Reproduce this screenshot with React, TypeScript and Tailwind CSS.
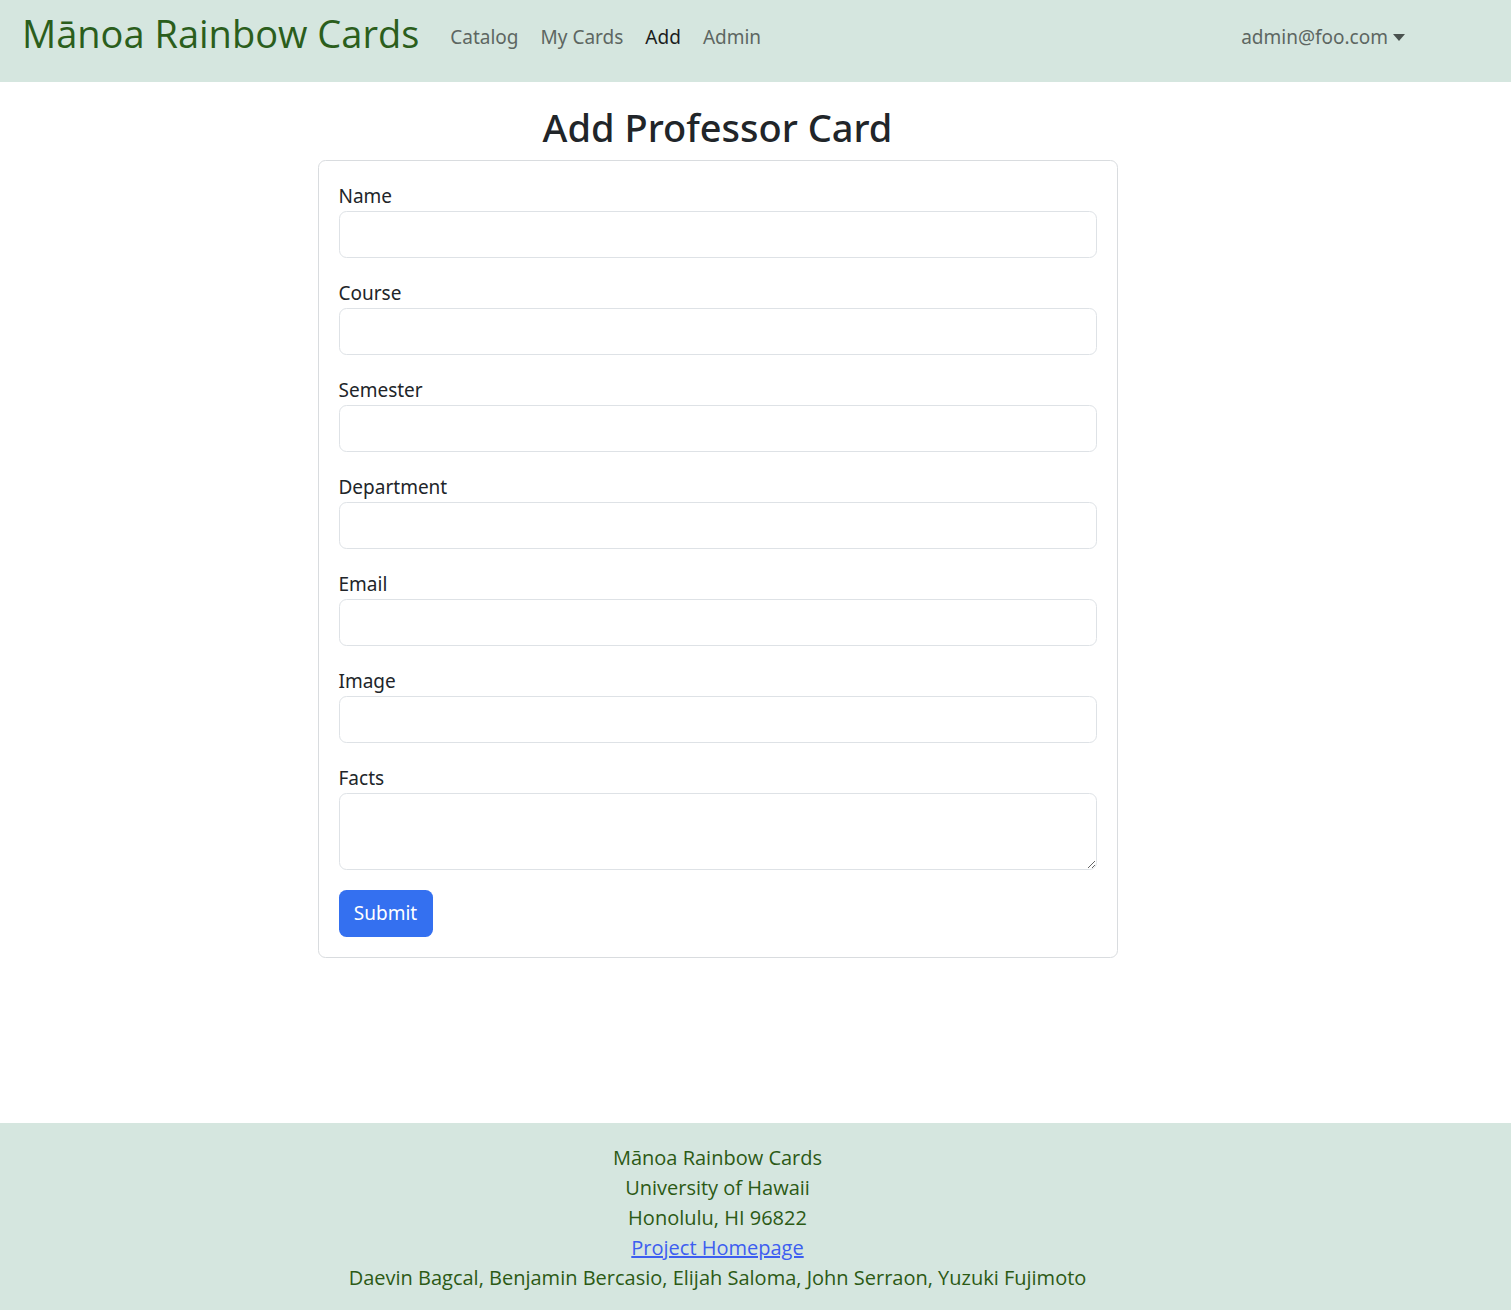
import React from "react";

const body = { fontFamily: '"Noto Sans", "Open Sans", sans-serif' };
const comic = { fontFamily: '"Comic Sans MS", "Open Sans", "Noto Sans", sans-serif' };

function Field({ label, textarea }: { label: string; textarea?: boolean }) {
  return (
    <div className="mb-[20px]">
      <label className="block text-[19px] leading-[30px] text-[#212529]">{label}</label>
      {textarea ? (
        <textarea className="block w-full h-[77px] border border-[#dee2e6] rounded-[7.5px] bg-white outline-none" />
      ) : (
        <input className="block w-full h-[47px] border border-[#dee2e6] rounded-[7.5px] bg-white outline-none" />
      )}
    </div>
  );
}

export default function App() {
  return (
    <div className="min-h-[1310px] flex flex-col bg-white" style={body}>
      <nav className="h-[82px] bg-[#d5e6df] flex items-start pt-[8px]">
        <div className="w-[1435px] flex items-center pl-[22px] pr-[30px]">
          <span className="text-[38px] leading-[50px] font-medium text-[#2b5e1c] mr-[20px]" style={comic}>
            Mānoa Rainbow Cards
          </span>
          <div className="flex items-center text-[19px] leading-[30px] mt-[8px]">
            <a className="px-[11px] text-[#5d6662]">Catalog</a>
            <a className="px-[11px] text-[#5d6662]">My Cards</a>
            <a className="px-[11px] text-[#1a1d1c]">Add</a>
            <a className="px-[11px] text-[#5d6662]">Admin</a>
          </div>
          <div className="ml-auto flex items-center text-[19px] leading-[30px] mt-[8px] text-[#5d6662]">
            <span>admin@foo.com</span>
            <svg width="12" height="7" viewBox="0 0 12 7" className="ml-[5px]">
              <path d="M0 0 L12 0 L6 7 Z" fill="#4a524f" />
            </svg>
          </div>
        </div>
      </nav>
      <main className="flex-1">
        <div className="w-[1435px] flex flex-col items-center pt-[22px] pb-[165px]">
          <h2 className="text-[38px] leading-[47px] font-medium text-[#212529] mb-[9px]">Add Professor Card</h2>
          <div className="w-[800px] border border-[#d9dcdf] rounded-[7.5px] p-[20px]">
            <Field label="Name" />
            <Field label="Course" />
            <Field label="Semester" />
            <Field label="Department" />
            <Field label="Email" />
            <Field label="Image" />
            <Field label="Facts" textarea />
            <button className="h-[47px] w-[94px] rounded-[7.5px] bg-[#3470f0] text-white text-[19px]">Submit</button>
          </div>
        </div>
      </main>
      <footer className="bg-[#d5e6df] pt-[20px] pb-[17px]">
        <div className="w-[1435px] flex flex-col items-center text-[20px] leading-[30px] text-[#2c5a15]" style={comic}>
          <div>Mānoa Rainbow Cards</div>
          <div>University of Hawaii</div>
          <div>Honolulu, HI 96822</div>
          <a className="text-[#3d5ef0] underline">Project Homepage</a>
          <div>Daevin Bagcal, Benjamin Bercasio, Elijah Saloma, John Serraon, Yuzuki Fujimoto</div>
        </div>
      </footer>
    </div>
  );
}
